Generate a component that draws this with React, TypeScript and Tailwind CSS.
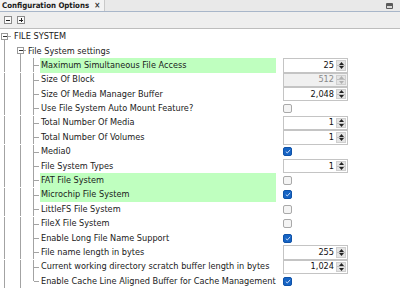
import React from "react";

type Row = {
  label: string;
  kind: "root" | "group" | "leaf";
  value?: { type: "spin"; v: string; disabled?: boolean } | { type: "check"; checked: boolean };
  green?: boolean;
  last?: boolean;
};

const rows: Row[] = [
  { label: "FILE SYSTEM", kind: "root" },
  { label: "File System settings", kind: "group" },
  { label: "Maximum Simultaneous File Access", kind: "leaf", green: true, value: { type: "spin", v: "25" } },
  { label: "Size Of Block", kind: "leaf", value: { type: "spin", v: "512", disabled: true } },
  { label: "Size Of Media Manager Buffer", kind: "leaf", value: { type: "spin", v: "2,048" } },
  { label: "Use File System Auto Mount Feature?", kind: "leaf", value: { type: "check", checked: false } },
  { label: "Total Number Of Media", kind: "leaf", value: { type: "spin", v: "1" } },
  { label: "Total Number Of Volumes", kind: "leaf", value: { type: "spin", v: "1" } },
  { label: "Media0", kind: "leaf", value: { type: "check", checked: true } },
  { label: "File System Types", kind: "leaf", value: { type: "spin", v: "1" } },
  { label: "FAT File System", kind: "leaf", green: true, value: { type: "check", checked: false } },
  { label: "Microchip File System", kind: "leaf", green: true, value: { type: "check", checked: true } },
  { label: "LittleFS File System", kind: "leaf", value: { type: "check", checked: false } },
  { label: "FileX File System", kind: "leaf", value: { type: "check", checked: false } },
  { label: "Enable Long File Name Support", kind: "leaf", value: { type: "check", checked: true } },
  { label: "File name length in bytes", kind: "leaf", value: { type: "spin", v: "255" } },
  { label: "Current working directory scratch buffer length in bytes", kind: "leaf", value: { type: "spin", v: "1,024" } },
  { label: "Enable Cache Line Aligned Buffer for Cache Management", kind: "leaf", last: true, value: { type: "check", checked: true } },
];

const LC = "#a3a3a3";
const H = 14.4;
const M = 7.2;

function Indent({ kind, last }: { kind: Row["kind"]; last?: boolean }) {
  if (kind === "root") {
    return (
      <svg width="13" height={H} className="shrink-0" shapeRendering="crispEdges">
        <rect x="1.5" y="3.5" width="6" height="6" fill="#fff" stroke="#9a9a9a" />
        <line x1="3" y1="6.5" x2="7" y2="6.5" stroke="#333" />
        <line x1="4.5" y1="10" x2="4.5" y2={H} stroke={LC} />
        <line x1="8" y1="6.5" x2="11" y2="6.5" stroke={LC} />
      </svg>
    );
  }
  if (kind === "group") {
    return (
      <svg width="27" height={H} className="shrink-0" shapeRendering="crispEdges">
        <line x1="4.5" y1="0" x2="4.5" y2={H} stroke={LC} />
        <rect x="17.5" y="3.5" width="6" height="6" fill="#fff" stroke="#9a9a9a" />
        <line x1="19" y1="6.5" x2="23" y2="6.5" stroke="#333" />
        <line x1="20.5" y1="10" x2="20.5" y2={H} stroke={LC} />
        <line x1="24" y1="6.5" x2="26" y2="6.5" stroke={LC} />
      </svg>
    );
  }
  return (
    <svg width="40" height={H} className="shrink-0" shapeRendering="crispEdges">
      <line x1="4.5" y1="0" x2="4.5" y2={H} stroke={LC} />
      <line x1="20.5" y1="0" x2="20.5" y2={H} stroke={LC} />
      <line x1="33.5" y1="0" x2="33.5" y2={last ? M : H} stroke={LC} />
      <line x1="33.5" y1={M} x2="39" y2={M} stroke={LC} />
    </svg>
  );
}

function Spinner({ v, disabled }: { v: string; disabled?: boolean }) {
  return (
    <div
      className={
        "w-[65px] h-full flex border border-[#c4c4c4] " + (disabled ? "bg-[#f0f0f0]" : "bg-white")
      }
    >
      <div
        className={
          "flex-1 flex items-center justify-end pr-[2px] leading-none " +
          (disabled ? "text-[#8a8a8a]" : "text-[#111]")
        }
      >
        {v}
      </div>
      <div className="w-[10px] my-[1px] mr-[1px] flex flex-col bg-[#e4e4e4] border border-[#cfcfcf]">
        <div className="flex-1 flex items-center justify-center">
          <svg width="5" height="3" viewBox="0 0 5 3">
            <path d="M0 3 L2.5 0 L5 3 Z" fill={disabled ? "#b0b0b0" : "#222"} />
          </svg>
        </div>
        <div className="h-px bg-[#c0c0c0]" />
        <div className="flex-1 flex items-center justify-center">
          <svg width="5" height="3" viewBox="0 0 5 3">
            <path d="M0 0 L2.5 3 L5 0 Z" fill={disabled ? "#b0b0b0" : "#222"} />
          </svg>
        </div>
      </div>
    </div>
  );
}

function Check({ checked }: { checked: boolean }) {
  if (checked) {
    return (
      <div className="w-[9px] h-[9px] rounded-[2px] bg-[#1664c4] border border-[#0f52a8] flex items-center justify-center">
        <svg width="6" height="5" viewBox="0 0 6 5">
          <path d="M0.8 2.6 L2.3 4 L5.2 0.8" fill="none" stroke="#dbe8ff" strokeWidth="0.9" />
        </svg>
      </div>
    );
  }
  return <div className="w-[9px] h-[9px] rounded-[2px] bg-[#f4f4f4] border-[1.5px] border-[#a9a9a9]" />;
}

export default function App() {
  return (
    <div
      className="w-[400px] h-[291px] overflow-hidden bg-white text-[#1a1a1a]"
      style={{ fontFamily: '"DejaVu Sans Condensed", "DejaVu Sans", sans-serif' }}
    >
      {/* header */}
      <div className="h-[12px] flex items-stretch bg-[#e9e9e9] border-b border-[#a8b6c9]">
        <div className="flex items-center gap-[5px] pl-[2px] pr-[4px] bg-[#f3f3f3] border-r border-[#c9c9c9] text-[7.8px] font-bold leading-none">
          <span>Configuration Options</span>
          <span className="text-[8px] text-[#333]">×</span>
        </div>
        <div className="flex-1" />
        <div className="flex items-center pr-[7px]">
          <div className="w-[7px] h-[6px] bg-[#5a5a5a] rounded-[1px] flex items-end p-[1px]">
            <div className="w-full h-[2px] bg-[#d8d8d8]" />
          </div>
        </div>
      </div>
      {/* toolbar */}
      <div className="h-[17px] flex items-center gap-[5px] pl-[4px] bg-[#eeeeee] border-b border-[#bdbdbd]">
        <div className="w-[8px] h-[8px] border border-[#8a8a8a] bg-[#fafafa] flex items-center justify-center">
          <div className="w-[4px] h-px bg-[#222]" />
        </div>
        <div className="w-[8px] h-[8px] border border-[#8a8a8a] bg-[#fafafa] flex items-center justify-center relative">
          <div className="w-[4px] h-px bg-[#222]" />
          <div className="absolute w-px h-[4px] bg-[#222]" />
        </div>
      </div>
      {/* tree */}
      <div className="pt-[0.5px] text-[9.1px]">
        {rows.map((r, i) => (
          <div key={i} className="flex items-stretch h-[14.4px]">
            <Indent kind={r.kind} last={r.last} />
            <div
              className={
                (r.kind === "leaf" ? "w-[236px] " : "") +
                "flex items-center pl-[1px] whitespace-nowrap leading-none " +
                (r.green ? "bg-[#bfffbf]" : "")
              }
            >
              {r.label}
            </div>
            {r.kind === "leaf" && (
              <div className="ml-[7px] w-[65px] flex items-center">
                {r.value?.type === "spin" ? (
                  <Spinner v={r.value.v} disabled={r.value.disabled} />
                ) : r.value?.type === "check" ? (
                  <Check checked={r.value.checked} />
                ) : null}
              </div>
            )}
          </div>
        ))}
      </div>
    </div>
  );
}
